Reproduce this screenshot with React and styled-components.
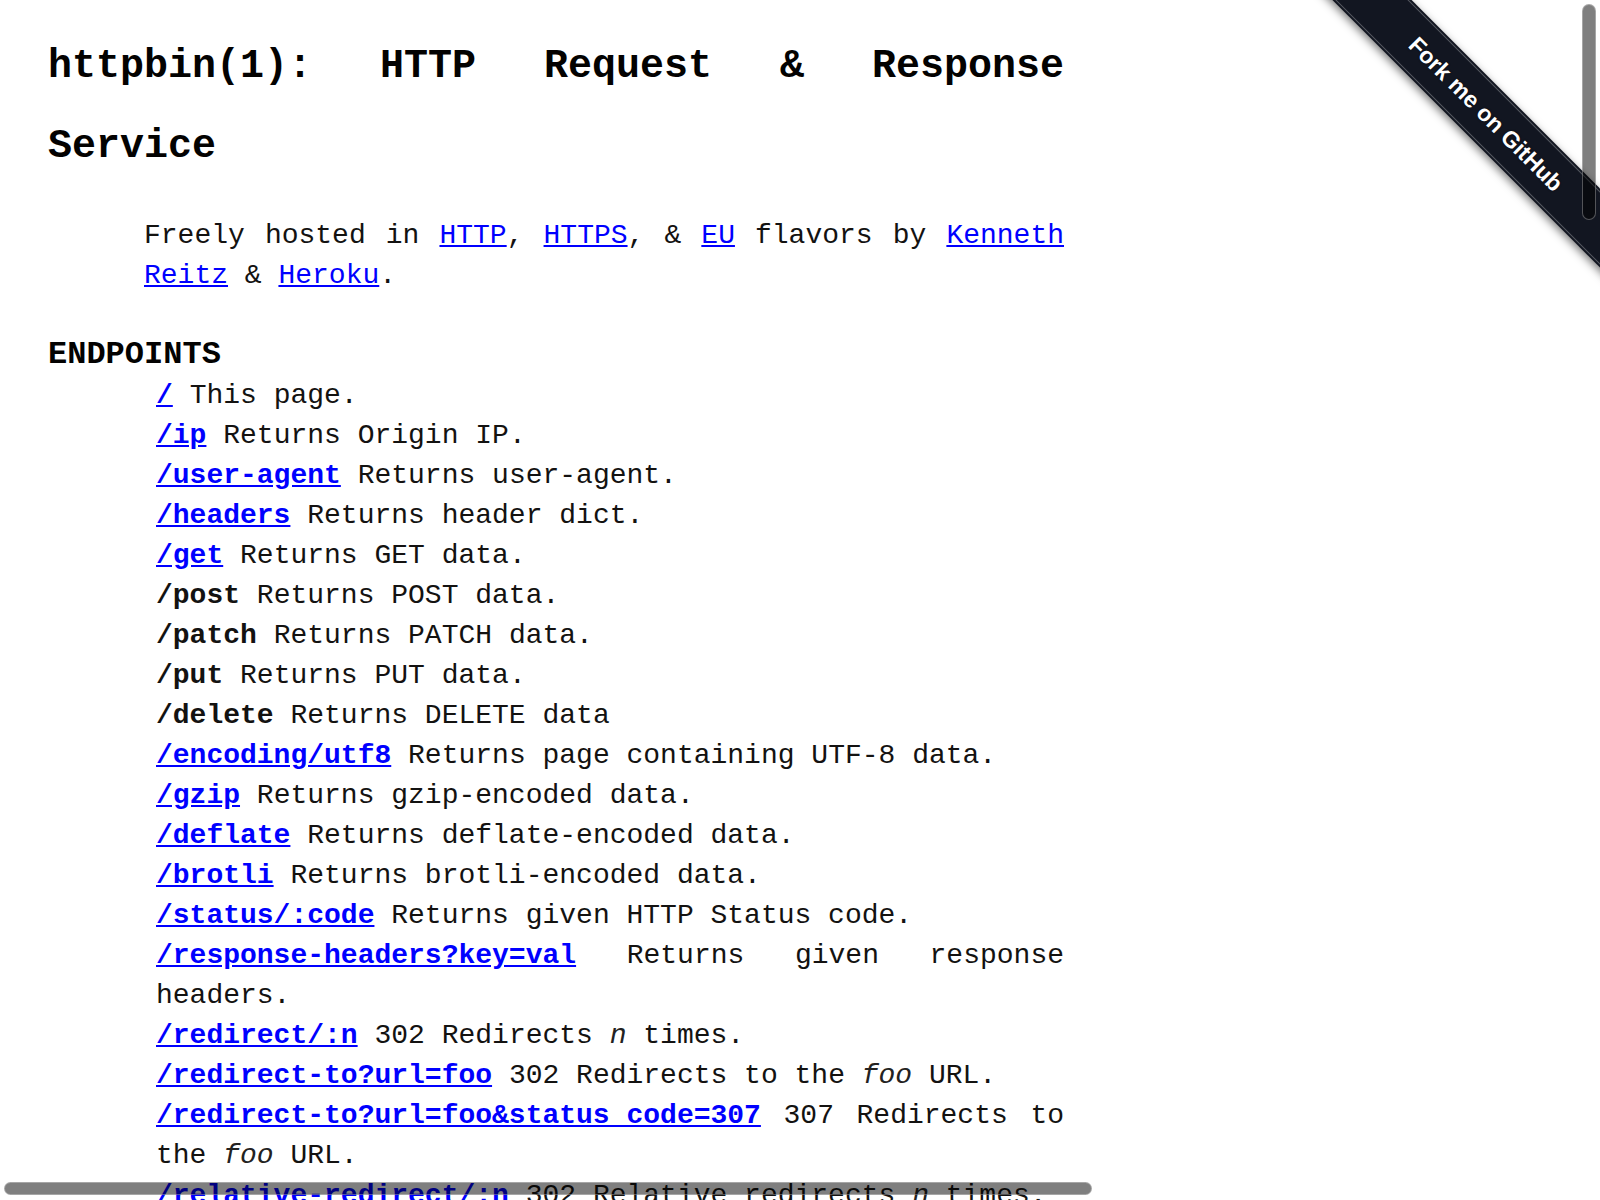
import React from 'react';
import styled, { createGlobalStyle } from 'styled-components';

// --- GLOBAL ---
const GlobalStyle = createGlobalStyle`
  html, body {
    margin: 0;
    padding: 0;
    background: #fff;
    overflow: hidden;
  }
`;

// --- MAN PAGE ---
const ManPage = styled.div`
  width: 1016px;
  padding: 0 108px 24px 48px;
  font-family: "Liberation Mono", "Courier New", monospace;
  font-size: 28px;
  line-height: 40px;
  color: #131211;
  text-align: justify;
  background: #fff;
`;
const Title = styled.h1`
  margin: 26.8px 0 28.8px;
  font-size: 40px;
  line-height: 80px;
  font-weight: bold;
  color: #030201;
`;
const Intro = styled.p`
  margin: 0 0 39px 96px;
`;
const SectionTitle = styled.h2`
  margin: 20px 0 0 0;
  font-size: 32px;
  line-height: 40px;
  font-weight: bold;
  color: #030201;
`;
const EndpointList = styled.ul`
  margin: 0 0 40px 0;
  padding: 1px 0 0 108px;
  list-style: none;
`;
const Endpoint = styled.li`
  margin: 0;
`;
const Link = styled.a`
  color: #0000ff;
  text-decoration: underline;
`;
const Code = styled.code`
  font-family: inherit;
  font-size: 28px;
  font-weight: bold;
  color: ${(p) => (p.$linked ? '#0000ff' : '#131211')};
`;
const Em = styled.em`
  font-style: italic;
  color: #232221;
`;

// --- RIBBON ---
const RibbonCorner = styled.a`
  position: absolute;
  top: 0;
  right: 0;
  width: 298px;
  height: 298px;
  overflow: hidden;
  text-decoration: none;
`;
const RibbonBand = styled.span`
  position: absolute;
  left: -56px;
  top: 85.5px;
  width: 480px;
  height: 56px;
  display: flex;
  align-items: center;
  justify-content: center;
  background: #121621;
  transform: rotate(45deg);
  box-shadow: 0 3px 8px rgba(0, 0, 0, 0.5);
  color: #fff;
  font-family: "Liberation Sans", Arial, sans-serif;
  font-weight: bold;
  font-size: 23px;
  text-shadow: 0 0 2px rgba(0, 0, 0, 0.8);
  &::before {
    content: '';
    position: absolute;
    left: 0;
    right: 0;
    top: 2px;
    bottom: 2px;
    border-top: 1px solid rgba(255, 255, 255, 0.28);
    border-bottom: 1px solid rgba(255, 255, 255, 0.28);
  }
`;

// --- OVERLAY SCROLLBARS ---
const Thumb = styled.div`
  position: fixed;
  box-sizing: border-box;
  background: rgba(0, 0, 0, 0.5);
  border: 1px solid rgba(255, 255, 255, 0.3);
  border-radius: 7px;
`;
const VerticalThumb = styled(Thumb)`
  top: 4px;
  right: 4px;
  width: 14px;
  height: 216px;
`;
const HorizontalThumb = styled(Thumb)`
  left: 4px;
  bottom: 5px;
  width: 1088px;
  height: 13px;
`;

const endpoints = [
  { path: '/', href: '/', desc: 'This page.' },
  { path: '/ip', href: '/ip', desc: 'Returns Origin IP.' },
  { path: '/user-agent', href: '/user-agent', desc: 'Returns user-agent.' },
  { path: '/headers', href: '/headers', desc: 'Returns header dict.' },
  { path: '/get', href: '/get', desc: 'Returns GET data.' },
  { path: '/post', desc: 'Returns POST data.' },
  { path: '/patch', desc: 'Returns PATCH data.' },
  { path: '/put', desc: 'Returns PUT data.' },
  { path: '/delete', desc: 'Returns DELETE data' },
  { path: '/encoding/utf8', href: '/encoding/utf8', desc: 'Returns page containing UTF-8 data.' },
  { path: '/gzip', href: '/gzip', desc: 'Returns gzip-encoded data.' },
  { path: '/deflate', href: '/deflate', desc: 'Returns deflate-encoded data.' },
  { path: '/brotli', href: '/brotli', desc: 'Returns brotli-encoded data.' },
  { path: '/status/:code', href: '/status/418', desc: 'Returns given HTTP Status code.' },
  { path: '/response-headers?key=val', href: '/response-headers', desc: 'Returns given response headers.' },
  { path: '/redirect/:n', href: '/redirect/6', desc: <>302 Redirects <Em>n</Em> times.</> },
  { path: '/redirect-to?url=foo', href: '/redirect-to', desc: <>302 Redirects to the <Em>foo</Em> URL.</> },
  { path: '/redirect-to?url=foo&status_code=307', href: '/redirect-to', desc: <>307 Redirects to the <Em>foo</Em> URL.</> },
  { path: '/relative-redirect/:n', href: '/relative-redirect/6', desc: <>302 Relative redirects <Em>n</Em> times.</> },
  { path: '/absolute-redirect/:n', href: '/absolute-redirect/6', desc: <>302 Absolute redirects <Em>n</Em> times.</> },
  { path: '/cookies', href: '/cookies', desc: 'Returns cookie data.' },
];

const App = () => (
  <>
    <GlobalStyle />
    <ManPage>
      <Title>httpbin(1): HTTP Request &amp; Response Service</Title>
      <Intro>
        Freely hosted in <Link href="#">HTTP</Link>, <Link href="#">HTTPS</Link>, &amp;{' '}
        <Link href="#">EU</Link> flavors by <Link href="#">Kenneth Reitz</Link> &amp;{' '}
        <Link href="#">Heroku</Link>.
      </Intro>
      <SectionTitle>ENDPOINTS</SectionTitle>
      <EndpointList>
        {endpoints.map((e) => (
          <Endpoint key={e.path}>
            {e.href ? (
              <Link href={e.href}><Code $linked>{e.path}</Code></Link>
            ) : (
              <Code>{e.path}</Code>
            )}{' '}
            {e.desc}
          </Endpoint>
        ))}
      </EndpointList>
    </ManPage>
    <RibbonCorner href="#">
      <RibbonBand>Fork me on GitHub</RibbonBand>
    </RibbonCorner>
    <VerticalThumb />
    <HorizontalThumb />
  </>
);

export default App;
